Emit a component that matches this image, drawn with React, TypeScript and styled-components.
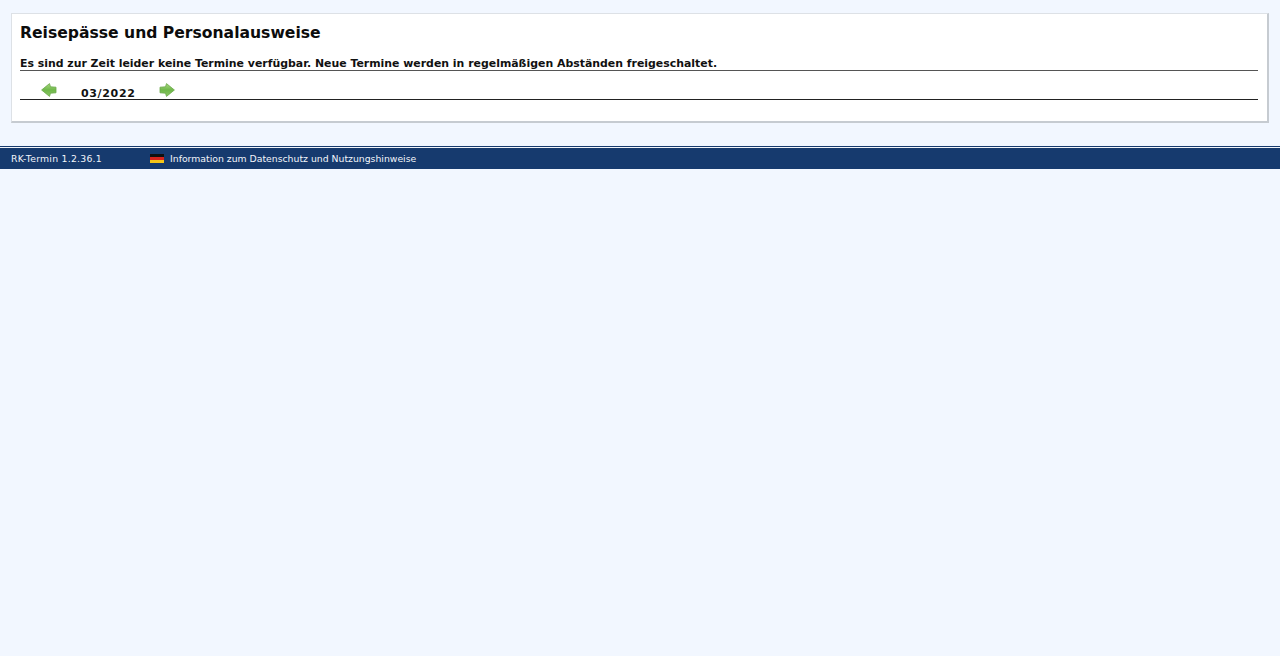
import React from 'react'
import styled, { createGlobalStyle } from 'styled-components'

const GlobalStyle = createGlobalStyle`
    html, body {
        margin: 0;
        padding: 0;
        min-height: 100%;
        background: #f2f7ff;
        font-family: "DejaVu Sans", Verdana, sans-serif;
        color: #111;
    }
`

const Page = styled.div`
    display: flex;
    flex-direction: column;
    padding-top: 13px;
`

const Card = styled.section`
    box-sizing: border-box;
    height: 110px;
    margin: 0 11px;
    padding: 9px 9px 0 8px;
    background: #fff;
    border: 1px solid #dde1e6;
    border-right: 2px solid #c6cbd1;
    border-bottom: 2px solid #c6cbd1;
`

const Title = styled.h1`
    margin: 0;
    font-size: 15.6px;
    line-height: 20px;
    font-weight: bold;
    color: #0c0c0c;
`

const Notice = styled.p`
    margin: 14px 0 0;
    font-size: 10.92px;
    line-height: 13px;
    font-weight: bold;
    border-bottom: 1px solid #555;
`

const MonthNav = styled.div`
    display: flex;
    align-items: flex-start;
    height: 29px;
    padding-left: 21px;
    border-bottom: 1px solid #222;
    box-sizing: border-box;
`

const ArrowButton = styled.a`
    display: block;
    width: 16px;
    height: 14px;
    margin-top: 11px;
`

const Month = styled.span`
    width: 102px;
    box-sizing: border-box;
    padding: 16px 0 0 24px;
    font-size: 11px;
    line-height: 13px;
    font-weight: bold;
    letter-spacing: 0.65px;
`

const Footer = styled.footer`
    display: flex;
    align-items: center;
    height: 21px;
    margin-top: 25px;
    padding-left: 11px;
    box-sizing: border-box;
    background: #163a6e;
    box-shadow: 0 -1px 0 #f2f5fa, 0 -2px 0 #163a6e;
    color: #f2f5fa;
    font-size: 9.3px;
`

const Version = styled.span`
    width: 139px;
    letter-spacing: 0.25px;
`

const Flag = styled.svg`
    width: 14px;
    height: 9px;
    margin-right: 6px;
    flex-shrink: 0;
`

const Arrow = ({ flip }: { flip?: boolean }) => (
    <svg width="16" height="14" viewBox="0 0 16 14" style={flip ? { transform: 'scaleX(-1)' } : undefined}>
        <defs>
            <linearGradient id="arrowFill" x1="0" y1="0" x2="0" y2="1">
                <stop offset="0" stopColor="#a9d67f" />
                <stop offset="0.5" stopColor="#6fb84a" />
                <stop offset="1" stopColor="#8cc765" />
            </linearGradient>
        </defs>
        <path
            d="M0.6 7 L8.5 0.6 L9.5 3.8 L15 4.2 L15 9.8 L9.5 10.2 L8.5 13.4 Z"
            fill="url(#arrowFill)"
            stroke="#6aa84a"
            strokeWidth="0.8"
            strokeLinejoin="round"
        />
    </svg>
)

const App = () => {
    return (
        <Page>
            <GlobalStyle />
            <Card>
                <Title>Reisepässe und Personalausweise</Title>
                <Notice>Es sind zur Zeit leider keine Termine verfügbar. Neue Termine werden in regelmäßigen Abständen freigeschaltet.</Notice>
                <MonthNav>
                    <ArrowButton><Arrow /></ArrowButton>
                    <Month>03/2022</Month>
                    <ArrowButton><Arrow flip /></ArrowButton>
                </MonthNav>
            </Card>
            <Footer>
                <Version>RK-Termin 1.2.36.1</Version>
                <Flag viewBox="0 0 14 9">
                    <rect width="14" height="3" y="0" fill="#111" />
                    <rect width="14" height="3" y="3" fill="#d8241c" />
                    <rect width="14" height="3" y="6" fill="#f5c518" />
                </Flag>
                <span>Information zum Datenschutz und Nutzungshinweise</span>
            </Footer>
        </Page>
    )
}

export default App
